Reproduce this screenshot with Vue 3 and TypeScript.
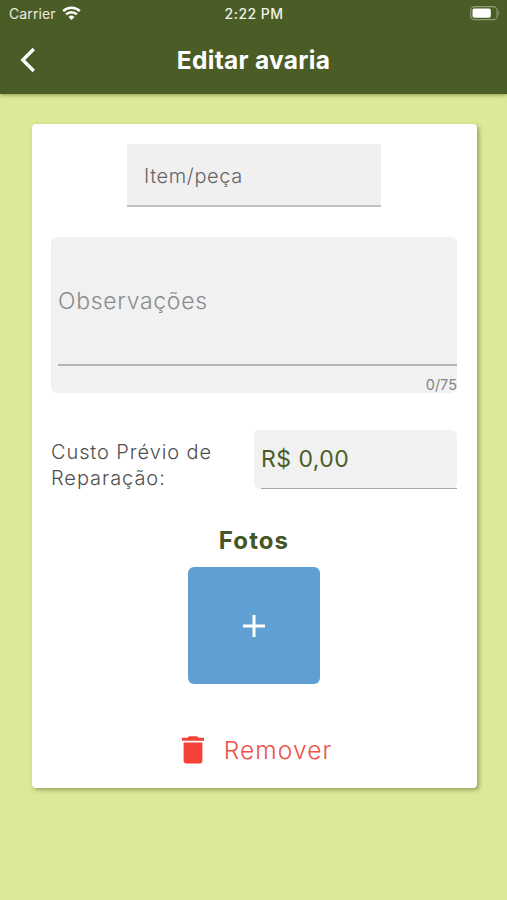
<script setup lang="ts">
import { computed, ref } from 'vue'

const item = ref('')
const notes = ref('')
const cost = ref('R$ 0,00')
const maxNotes = 75
const counter = computed(() => `${notes.value.length}/${maxNotes}`)
</script>

<template>
  <div class="screen">
    <header class="header">
      <div class="status">
        <div class="carrier">
          <span class="carrier-name">Carrier</span>
          <svg class="wifi" width="19" height="15" viewBox="0 0 19 15">
            <path d="M1.2 5.2a12 12 0 0 1 16.6 0M4.1 8.3a7.8 7.8 0 0 1 10.8 0" fill="none" stroke="#fff" stroke-width="2.5" />
            <path d="M6.5 11a4.4 4.4 0 0 1 6 0l-3 3z" fill="#fff" />
          </svg>
        </div>
        <span class="time">2:22 PM</span>
        <svg class="battery" width="31" height="15" viewBox="0 0 31 15">
          <rect x="0.7" y="0.7" width="26.4" height="13" rx="3.8" fill="none" stroke="#8f9b78" stroke-width="1.2" />
          <rect x="2.5" y="2.6" width="18.3" height="9.2" rx="1.8" fill="#fff" />
          <path d="M28.4 4.8q2 2.4 0 4.8z" fill="#8f9b78" />
        </svg>
      </div>
      <div class="nav">
        <button class="back" type="button" aria-label="Voltar">
          <svg width="16" height="26" viewBox="0 0 16 26">
            <path d="M13.8 2L2.8 13l11 11" fill="none" stroke="#fff" stroke-width="3.3" />
          </svg>
        </button>
        <h1 class="title">Editar avaria</h1>
      </div>
    </header>

    <main class="card">
      <input v-model="item" class="item" type="text" placeholder="Item/peça" />

      <div class="notes">
        <input v-model="notes" class="notes-input" type="text" placeholder="Observações" :maxlength="maxNotes" />
        <span class="counter">{{ counter }}</span>
      </div>

      <div class="cost">
        <label class="cost-label" for="cost"><span class="line-a">Custo Prévio de</span><br />Reparação:</label>
        <div class="cost-field">
          <input id="cost" v-model="cost" class="cost-input" type="text" />
        </div>
      </div>

      <h2 class="photos-title">Fotos</h2>
      <button class="add" type="button" aria-label="Adicionar foto">
        <svg width="24" height="24" viewBox="0 0 24 24">
          <path d="M12 1v22M1 12h22" stroke="#fff" stroke-width="3" />
        </svg>
      </button>

      <button class="remove" type="button">
        <svg width="22" height="28" viewBox="0 0 22 28">
          <path d="M0 1.8h5.4L7 .3h8l1.6 1.5H22v3H0zM1.6 6.6h18.8v18a3 3 0 0 1-3 3H4.6a3 3 0 0 1-3-3z" fill="#f44336" />
        </svg>
        <span class="remove-text">Remover</span>
      </button>
    </main>
  </div>
</template>

<style>
body {
  margin: 0;
  background: #dde996;
}
</style>

<style scoped>
.screen {
  box-sizing: border-box;
  width: 507px;
  height: 900px;
  overflow: hidden;
  background: #dde996;
  font-family: Inter, "Liberation Sans", sans-serif;
}
.screen *,
.screen *::before {
  box-sizing: border-box;
}
input,
button {
  margin: 0;
  padding: 0;
  border: 0;
  border-radius: 0;
  outline: 0;
  background: none;
  font-family: inherit;
}
.header {
  height: 94px;
  background: #4b5d27;
  color: #fff;
  box-shadow: 0 1px 4px rgba(50, 70, 10, 0.5);
}
.status {
  display: grid;
  grid-template-columns: 1fr auto 1fr;
  align-items: center;
  height: 27px;
  padding: 0 6px 0 9px;
}
.carrier {
  display: flex;
  align-items: center;
  gap: 6px;
  font-size: 14px;
  color: #e9ecdf;
}
.carrier-name {
  letter-spacing: 0.1px;
}
.wifi {
  margin-top: -1px;
}
.time {
  margin-right: 2px;
  font-size: 14px;
  font-weight: 500;
  letter-spacing: 0.45px;
  color: #f0f2e8;
}
.battery {
  justify-self: end;
}
.nav {
  display: grid;
  grid-template-columns: 60px 1fr 60px;
  align-items: center;
  height: 66px;
}
.back {
  display: flex;
  justify-self: start;
  margin-left: 19.5px;
}
.title {
  margin: 0;
  text-align: center;
  font-size: 24.5px;
  font-weight: 700;
  line-height: 30px;
  letter-spacing: 0.3px;
}
.card {
  display: flex;
  flex-direction: column;
  align-items: center;
  width: 445px;
  height: 664px;
  margin: 30px 0 0 31.5px;
  padding: 20px 19.5px 0;
  border-radius: 4px;
  background: #fff;
  box-shadow: 2px 2px 4px rgba(60, 75, 20, 0.45);
}
.item {
  width: 254px;
  height: 63px;
  padding: 3px 17px 0;
  border-bottom: 2px solid #c1c1c1;
  background: #f0f0f0;
  font-size: 20px;
  font-weight: 300;
  letter-spacing: 0.6px;
  color: #444;
}
.item::placeholder {
  color: #666;
  opacity: 1;
}
.notes {
  display: flex;
  flex-direction: column;
  align-items: flex-end;
  width: 406px;
  height: 156px;
  margin-top: 30px;
  padding-left: 7px;
  border-radius: 6px;
  background: #f1f1f1;
}
.notes-input {
  flex-shrink: 0;
  width: 100%;
  height: 129px;
  border-bottom: 2px solid #b4b4b4;
  font-size: 23px;
  font-weight: 300;
  letter-spacing: 0.7px;
  color: #444;
}
.notes-input::placeholder {
  color: #8c8c8c;
  opacity: 1;
}
.counter {
  margin-top: 10px;
  font-size: 14.5px;
  line-height: 18px;
  color: #858585;
}
.cost {
  display: flex;
  justify-content: space-between;
  width: 406px;
  height: 59px;
  margin-top: 37px;
}
.cost-label {
  padding-top: 9px;
  font-size: 20px;
  font-weight: 300;
  line-height: 26px;
  letter-spacing: 0.95px;
  color: #505050;
}
.line-a {
  letter-spacing: 0.9px;
}
.cost-field {
  width: 203px;
  height: 59px;
  padding-left: 7px;
  border-radius: 6px;
  background: #f1f1f1;
}
.cost-input {
  width: 196px;
  height: 59px;
  border-bottom: 1.5px solid #a6a6a6;
  font-size: 23px;
  font-weight: 400;
  letter-spacing: 0.45px;
  color: #4b5d27;
}
.photos-title {
  margin: 37px 0 0;
  font-size: 24px;
  font-weight: 700;
  line-height: 30px;
  letter-spacing: 1.1px;
  color: #435623;
}
.add {
  display: flex;
  align-items: center;
  justify-content: center;
  width: 132px;
  height: 117px;
  margin-top: 11px;
  border-radius: 6px;
  background: #609fd3;
}
.remove {
  display: flex;
  align-items: center;
  gap: 20px;
  height: 34px;
  margin-top: 49px;
  margin-left: 6px;
}
.remove-text {
  font-size: 24.5px;
  font-weight: 300;
  line-height: 34px;
  letter-spacing: 1.1px;
  color: #ee5048;
}
</style>
